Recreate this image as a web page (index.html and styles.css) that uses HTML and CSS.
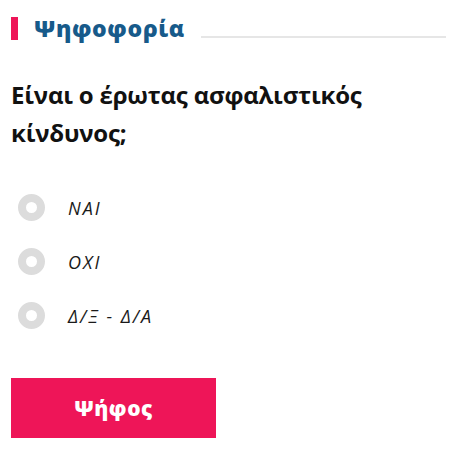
FILE: index.html
```html
<!DOCTYPE html>
<html lang="el">
<head>
<meta charset="utf-8">
<link rel="stylesheet" href="styles.css">
</head>
<body>
<div class="poll">
  <div class="poll-head">
    <span class="poll-mark"></span>
    <h2 class="poll-title">Ψηφοφορία</h2>
    <span class="poll-rule"></span>
  </div>
  <h3 class="poll-question">Είναι ο έρωτας ασφαλιστικός κίνδυνος;</h3>
  <ul class="poll-options">
    <li class="poll-option"><span class="radio"></span><span class="opt-label">ΝΑΙ</span></li>
    <li class="poll-option"><span class="radio"></span><span class="opt-label">ΟΧΙ</span></li>
    <li class="poll-option"><span class="radio"></span><span class="opt-label">Δ/Ξ - Δ/Α</span></li>
  </ul>
  <button class="poll-btn">Ψήφος</button>
</div>
</body>
</html>
```

FILE: styles.css
```css
html, body {
  margin: 0;
  padding: 0;
  background: #ffffff;
}
.poll {
  padding: 17px 9px 0 11px;
  font-family: "Open Sans", "Noto Sans", sans-serif;
}
.poll-head {
  display: flex;
  align-items: center;
  height: 23px;
}
.poll-mark {
  width: 7px;
  height: 23px;
  background: #ee1558;
  flex: none;
}
.poll-title {
  margin: 0 0 0 16px;
  font-size: 23px;
  font-weight: 800;
  color: #175a8a;
  line-height: 23px;
  letter-spacing: 0.6px;
}
.poll-rule {
  flex: 1;
  height: 2px;
  background: #e6e6e6;
  margin-left: 16px;
  align-self: flex-end;
  margin-bottom: 2px;
}
.poll-question {
  margin: 36px 0 0 0;
  font-size: 24px;
  font-weight: 700;
  line-height: 38px;
  color: #111111;
  max-width: 380px;
  letter-spacing: -0.2px;
}
.poll-options {
  list-style: none;
  margin: 42px 0 0 0;
  padding: 0;
  display: flex;
  flex-direction: column;
  gap: 27px;
}
.poll-option {
  display: flex;
  align-items: center;
  height: 27px;
}
.radio {
  width: 27px;
  height: 27px;
  box-sizing: border-box;
  border-radius: 50%;
  border: 8.5px solid #dcdcdc;
  background: #ffffff;
  margin-left: 7px;
  flex: none;
}
.opt-label {
  margin-left: 23px;
  font-size: 18px;
  font-style: italic;
  letter-spacing: 2px;
  color: #1a1a1a;
}
.poll-btn {
  display: block;
  margin-top: 49px;
  width: 205px;
  height: 60px;
  border: 0;
  background: #ee1558;
  color: #ffffff;
  font-family: "Open Sans", "Noto Sans", sans-serif;
  font-size: 21px;
  font-weight: 800;
  letter-spacing: 0.5px;
  cursor: pointer;
}
```
